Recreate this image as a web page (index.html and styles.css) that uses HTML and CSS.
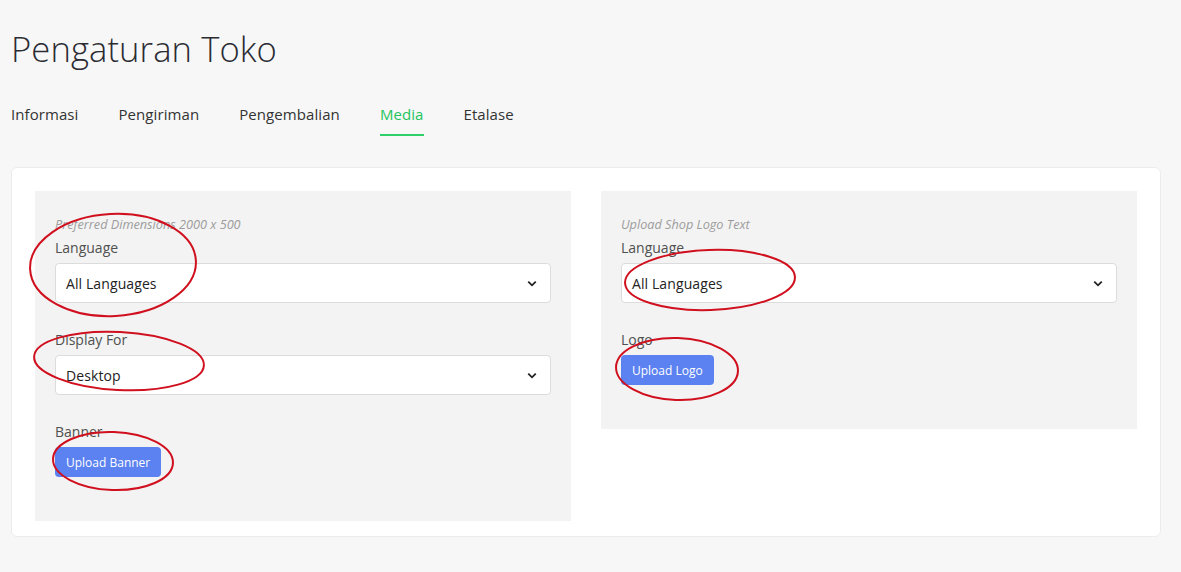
FILE: index.html
```html
<!DOCTYPE html>
<html lang="id">
<head>
<meta charset="utf-8">
<title>Pengaturan Toko</title>
<link rel="stylesheet" href="styles.css">
</head>
<body>
<div class="page">
  <h1 class="title">Pengaturan Toko</h1>
  <nav class="tabs">
    <a class="tab">Informasi</a>
    <a class="tab">Pengiriman</a>
    <a class="tab">Pengembalian</a>
    <a class="tab active">Media</a>
    <a class="tab">Etalase</a>
  </nav>
  <section class="card">
    <div class="panel">
      <p class="hint">Preferred Dimensions 2000 x 500</p>
      <div class="field">
        <label class="label">Language</label>
        <div class="select"><span>All Languages</span><svg class="chev" viewBox="0 0 12 8" width="10" height="7"><path d="M1.5 1.8 6 6.2 10.5 1.8" fill="none" stroke="#222" stroke-width="2.2"/></svg></div>
      </div>
      <div class="field">
        <label class="label">Display For</label>
        <div class="select"><span>Desktop</span><svg class="chev" viewBox="0 0 12 8" width="10" height="7"><path d="M1.5 1.8 6 6.2 10.5 1.8" fill="none" stroke="#222" stroke-width="2.2"/></svg></div>
      </div>
      <div class="field">
        <label class="label">Banner</label>
        <button class="btn">Upload Banner</button>
      </div>
    </div>
    <div class="panel panel-short">
      <p class="hint">Upload Shop Logo Text</p>
      <div class="field">
        <label class="label">Language</label>
        <div class="select"><span>All Languages</span><svg class="chev" viewBox="0 0 12 8" width="10" height="7"><path d="M1.5 1.8 6 6.2 10.5 1.8" fill="none" stroke="#222" stroke-width="2.2"/></svg></div>
      </div>
      <div class="field">
        <label class="label">Logo</label>
        <button class="btn">Upload Logo</button>
      </div>
    </div>
  </section>
</div>
<svg class="marks" width="1181" height="572" viewBox="0 0 1181 572">
  <g fill="none" stroke="#d0101e" stroke-width="2">
    <ellipse cx="113" cy="265" rx="83" ry="51" transform="rotate(-3 113 265)"/>
    <ellipse cx="119" cy="361" rx="85" ry="29" transform="rotate(3 119 361)"/>
    <ellipse cx="113" cy="461" rx="60" ry="29" transform="rotate(2 113 461)"/>
    <ellipse cx="710" cy="280" rx="85" ry="30" transform="rotate(-2 710 280)"/>
    <ellipse cx="677" cy="369" rx="61" ry="31" transform="rotate(2 677 369)"/>
  </g>
</svg>
</body>
</html>
```

FILE: styles.css
```css
* { box-sizing: border-box; }
html, body { margin: 0; padding: 0; }
body {
  background: #f7f7f7;
  font-family: "Open Sans", "Noto Sans", sans-serif;
  color: #333;
  width: 1181px;
  height: 572px;
  overflow: hidden;
  position: relative;
}
.page {
  padding: 0 20px 0 11px;
}
.title {
  margin: 0;
  padding-top: 26px;
  font-family: "Open Sans", sans-serif;
  font-weight: 300;
  font-size: 34.6px;
  line-height: 46px;
  color: #2b2b33;
  letter-spacing: 0.1px;
}
.tabs {
  display: flex;
  gap: 40px;
  margin-top: 28px;
  height: 37px;
}
.tab {
  font-size: 15px;
  line-height: 22px;
  letter-spacing: 0.08px;
  color: #333;
  padding-top: 3px;
  height: 36px;
  border-bottom: 2px solid transparent;
}
.tab.active {
  color: #23c45e;
  border-bottom-color: #2fd06a;
}
.card {
  margin-top: 30px;
  width: 1150px;
  height: 370px;
  background: #fff;
  border: 1px solid #ececec;
  border-radius: 6px;
  padding: 23px 23px;
  display: flex;
  gap: 30px;
  align-items: flex-start;
}
.panel {
  width: 536px;
  height: 330px;
  background: #f3f3f3;
  padding: 25px 20px 0 20px;
}
.panel-short { height: 238px; }
.hint {
  margin: 0 0 6px;
  font-size: 12.7px;
  line-height: 16px;
  font-style: italic;
  color: #9c9c9c;
}
.field {
  display: flex;
  flex-direction: column;
}
.field + .field { margin-top: 27px; }
.label {
  font-size: 14px;
  line-height: 20px;
  margin-bottom: 5px;
  color: #505050;
}
.select {
  height: 40px;
  background: #fff;
  border: 1px solid #dcdcdc;
  border-radius: 4px;
  display: flex;
  align-items: center;
  justify-content: space-between;
  padding: 0 13px 0 10px;
  font-size: 14px;
  letter-spacing: 0.1px;
  color: #222;
}
.chev { display: block; }
.btn {
  align-self: flex-start;
  height: 30px;
  padding: 0 11px;
  background: #5b82f0;
  border: none;
  border-radius: 4px;
  color: #fff;
  font-family: "Open Sans", sans-serif;
  font-size: 12px;
}
.marks {
  position: absolute;
  left: 0;
  top: 0;
  pointer-events: none;
}
```
